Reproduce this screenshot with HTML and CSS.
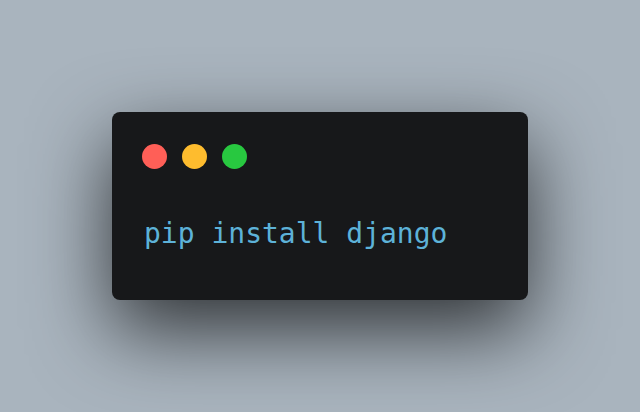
FILE: index.html
```html
<!DOCTYPE html>
<html lang="en">
<head>
  <meta charset="UTF-8">
  <meta name="viewport" content="width=device-width, initial-scale=1.0">
  <title>Terminal</title>
  <link rel="stylesheet" href="styles.css">
</head>
<body>
  <div class="stage">
    <div class="window">
      <div class="dots">
        <span class="dot red"></span>
        <span class="dot yellow"></span>
        <span class="dot green"></span>
      </div>
      <p class="code">pip install django</p>
    </div>
  </div>
</body>
</html>
```

FILE: styles.css
```css
*{
  margin: 0;
  padding: 0;
  box-sizing: border-box;
}
body{
  background: #a9b4be;
  font-family: "DejaVu Sans Mono", monospace;
}
.stage{
  width: 640px;
  height: 412px;
  display: flex;
  align-items: center;
  justify-content: center;
}
.window{
  width: 416px;
  height: 188px;
  background: #17181a;
  border-radius: 8px;
  padding: 32px 30px;
  box-shadow: 0 30px 80px rgba(0, 0, 0, 0.72);
}
.dots{
  display: flex;
  gap: 15px;
}
.dot{
  display: block;
  width: 25px;
  height: 25px;
  border-radius: 50%;
}
.red{
  background: #ff5f57;
}
.yellow{
  background: #febc2e;
}
.green{
  background: #28c840;
}
.code{
  margin-top: 48px;
  padding-left: 2px;
  font-size: 28px;
  line-height: 34px;
  color: #5db2d8;
}
```
